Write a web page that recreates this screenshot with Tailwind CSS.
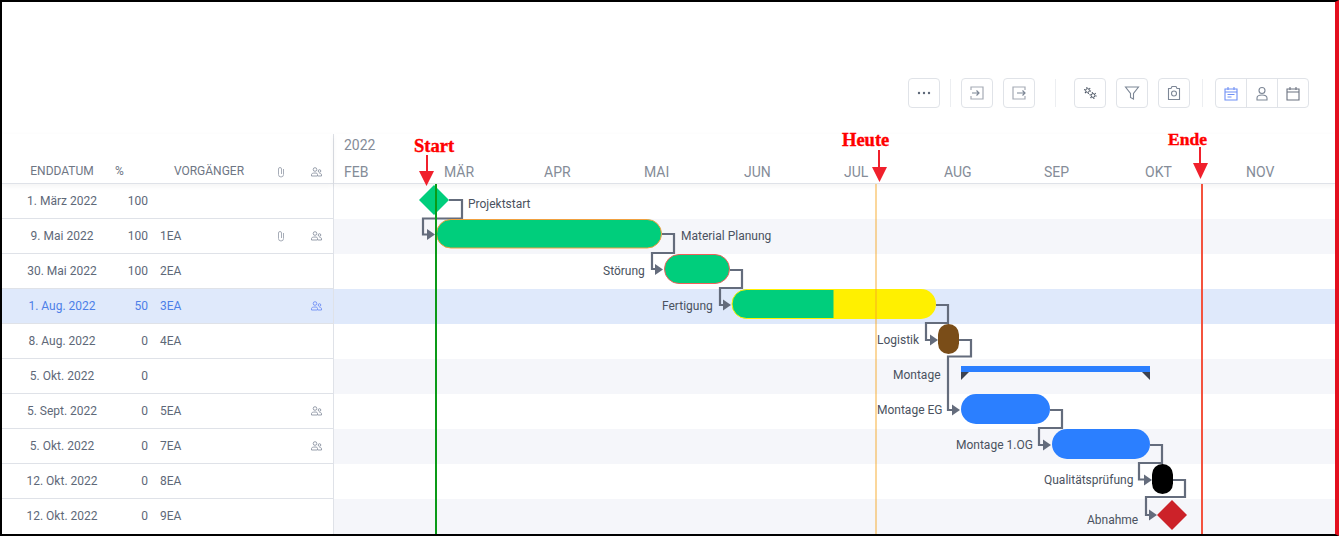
<!DOCTYPE html>
<html lang="en">
<head>
<meta charset="UTF-8">
<title>Gantt</title>
<script src="https://cdn.jsdelivr.net/npm/@tailwindcss/browser@4"></script>
</head>
<body class="bg-white w-[1341px] h-[536px] font-['Roboto',sans-serif] text-[12px] text-[#5e6878] overflow-hidden">
<div class="w-[1339px] h-[536px] border-2 border-black border-r-[#e3101f] border-r-4 flex flex-col overflow-hidden">
  <!-- toolbar -->
  <div class="h-[132px] flex items-start justify-end pt-[76px] pr-[26px] shrink-0">
    <div class="flex items-center">
      <button class="w-8 h-[30px] border border-[#e0e3e8] rounded flex items-center justify-center">
        <svg width="14" height="4" viewBox="0 0 14 4" fill="#5e6878"><circle cx="2" cy="2" r="1.2"/><circle cx="7" cy="2" r="1.2"/><circle cx="12" cy="2" r="1.2"/></svg>
      </button>
      <div class="w-px h-[28px] bg-[#eceef1] ml-[10px] mr-[10px]"></div>
      <button class="w-8 h-[30px] border border-[#e0e3e8] rounded flex items-center justify-center">
        <svg width="16" height="16" viewBox="0 0 16 16" fill="none" stroke-width="1.2"><path d="M2 5V2h12v12H2v-3" stroke="#a6abb5"/><path d="M3 8h7M7.500 5.500 10 8l-2.500 2.500" stroke="#7d8796"/></svg>
      </button>
      <button class="w-8 h-[30px] border border-[#e0e3e8] rounded flex items-center justify-center ml-[10px]">
        <svg width="16" height="16" viewBox="0 0 16 16" fill="none" stroke-width="1.2"><path d="M14 5V2H2v12h12v-3" stroke="#a6abb5"/><path d="M6 8h8M11.500 5.500 14 8l-2.500 2.500" stroke="#7d8796"/></svg>
      </button>
      <div class="w-px h-[28px] bg-[#eceef1] ml-[20px] mr-[18px]"></div>
      <button class="w-8 h-[30px] border border-[#e0e3e8] rounded flex items-center justify-center">
        <svg width="14" height="14" viewBox="0 0 14 14" fill="none" stroke="#4b5563"><circle cx="4.500" cy="4.500" r="1.900"/><circle cx="4.500" cy="4.500" r="3" stroke-width="1.200" stroke-dasharray="1.100 2.040"/><circle cx="10" cy="9.500" r="1.900"/><circle cx="10" cy="9.500" r="3" stroke-width="1.200" stroke-dasharray="1.100 2.040"/></svg>
      </button>
      <button class="w-8 h-[30px] border border-[#e0e3e8] rounded flex items-center justify-center ml-[10px]">
        <svg width="16" height="16" viewBox="0 0 16 16" fill="none" stroke="#7d8796" stroke-width="1.1"><path d="M1.500 2h13L9.500 8.500V14l-3-1.500v-4z"/></svg>
      </button>
      <button class="w-8 h-[30px] border border-[#e0e3e8] rounded flex items-center justify-center ml-[10px]">
        <svg width="16" height="16" viewBox="0 0 16 16" fill="none" stroke="#7d8796" stroke-width="1.1"><path d="M2.500 3.500h2.500l1-2h4l1 2h2.500v11h-11z"/><circle cx="8" cy="8.500" r="2.500"/></svg>
      </button>
      <div class="w-px h-[28px] bg-[#eceef1] ml-[12px] mr-[12px]"></div>
      <div class="flex border border-[#e0e3e8] rounded h-[30px]">
        <div class="w-[31px] flex items-center justify-center border-r border-[#e0e3e8]">
          <svg width="14" height="15" viewBox="0 0 14 15" fill="none" stroke="#6f8ff5" stroke-width="1.1"><path d="M1 3h12v11H1zM1 6h12M4 1v3M10 1v3M3.500 8.500h7M3.500 11h4"/></svg>
        </div>
        <div class="w-[31px] flex items-center justify-center border-r border-[#e0e3e8]">
          <svg width="14" height="15" viewBox="0 0 14 15" fill="none" stroke="#7d8796" stroke-width="1.1"><circle cx="7" cy="4.500" r="3"/><path d="M2 14v-2c0-2 2-3 5-3s5 1 5 3v2z"/></svg>
        </div>
        <div class="w-[30px] flex items-center justify-center">
          <svg width="14" height="15" viewBox="0 0 14 15" fill="none" stroke="#6b7280" stroke-width="1.1"><path d="M1 3h12v11H1zM1 6h12M4 1v3M10 1v3"/></svg>
        </div>
      </div>
    </div>
  </div>

  <div class="flex flex-1 min-h-0">
    <!-- table -->
    <div class="w-[332px] shrink-0 border-r border-[#dfe2e8] flex flex-col">
      <div class="h-[50px] shrink-0 border-b border-[#dfe2e8] flex items-end pb-[3px] text-[#6e7684] shadow-[0_2px_6px_rgba(0,0,0,0.05)]">
        <div class="w-[106px] text-center pl-[14px]">ENDDATUM</div>
        <div class="w-[22px] pl-[7px]">%</div>
        <div class="w-[130px] text-center pl-[28px]">VORGÄNGER</div>
        <div class="w-[42px] h-[16px] flex justify-center items-center"><svg width="8" height="12" viewBox="0 0 8 12" fill="none" stroke="#a7adb8"><path d="M6.500 3v5.500a2.500 2.500 0 0 1-5 0V3a1.500 1.500 0 0 1 3 0v5"/></svg></div>
        <div class="w-[28px] h-[16px] flex justify-center items-center"><svg width="11" height="10" viewBox="0 0 11 10" fill="none" stroke="#8c94a3" stroke-width=".9"><circle cx="4" cy="2.500" r="1.800"/><circle cx="8.500" cy="4" r="1.300"/><path d="M.5 9V7.500c0-1 1.500-1.500 3.500-1.500s2.500.5 2.500 1.500V9zM7 9h3.500V7.500c0-.7-1-1-2-1"/></svg></div>
      </div>
      <div class="flex h-[35px] shrink-0 border-b border-[#dfe2e8] items-center"><div class="w-[106px] text-center pl-[14px]">1. März 2022</div><div class="w-[40px] text-right">100</div></div>
      <div class="flex h-[35px] shrink-0 border-b border-[#dfe2e8] items-center"><div class="w-[106px] text-center pl-[14px]">9. Mai 2022</div><div class="w-[40px] text-right">100</div><div class="pl-[12px] w-[126px]">1EA</div><div class="w-[14px] flex justify-center"><svg width="8" height="12" viewBox="0 0 8 12" fill="none" stroke="#a7adb8"><path d="M6.500 3v5.500a2.500 2.500 0 0 1-5 0V3a1.500 1.500 0 0 1 3 0v5"/></svg></div><div class="w-[26px] ml-[15px] flex justify-center"><svg width="11" height="10" viewBox="0 0 11 10" fill="none" stroke="#8c94a3" stroke-width=".9"><circle cx="4" cy="2.500" r="1.800"/><circle cx="8.500" cy="4" r="1.300"/><path d="M.5 9V7.500c0-1 1.500-1.500 3.500-1.500s2.500.5 2.500 1.500V9zM7 9h3.500V7.500c0-.7-1-1-2-1"/></svg></div></div>
      <div class="flex h-[35px] shrink-0 border-b border-[#dfe2e8] items-center"><div class="w-[106px] text-center pl-[14px]">30. Mai 2022</div><div class="w-[40px] text-right">100</div><div class="pl-[12px]">2EA</div></div>
      <div class="flex h-[35px] shrink-0 border-b border-[#dfe2e8] items-center bg-[#dfe9fb] text-[#4d7fe8]"><div class="w-[106px] text-center pl-[14px]">1. Aug. 2022</div><div class="w-[40px] text-right">50</div><div class="pl-[12px] w-[155px]">3EA</div><div class="w-[26px] flex justify-center"><svg width="11" height="10" viewBox="0 0 11 10" fill="none" stroke="#6f8ff5" stroke-width=".9"><circle cx="4" cy="2.500" r="1.800"/><circle cx="8.500" cy="4" r="1.300"/><path d="M.5 9V7.500c0-1 1.500-1.500 3.500-1.500s2.500.5 2.500 1.500V9zM7 9h3.500V7.500c0-.7-1-1-2-1"/></svg></div></div>
      <div class="flex h-[35px] shrink-0 border-b border-[#dfe2e8] items-center"><div class="w-[106px] text-center pl-[14px]">8. Aug. 2022</div><div class="w-[40px] text-right">0</div><div class="pl-[12px]">4EA</div></div>
      <div class="flex h-[35px] shrink-0 border-b border-[#dfe2e8] items-center"><div class="w-[106px] text-center pl-[14px]">5. Okt. 2022</div><div class="w-[40px] text-right">0</div></div>
      <div class="flex h-[35px] shrink-0 border-b border-[#dfe2e8] items-center"><div class="w-[106px] text-center pl-[14px]">5. Sept. 2022</div><div class="w-[40px] text-right">0</div><div class="pl-[12px] w-[155px]">5EA</div><div class="w-[26px] flex justify-center"><svg width="11" height="10" viewBox="0 0 11 10" fill="none" stroke="#8c94a3" stroke-width=".9"><circle cx="4" cy="2.500" r="1.800"/><circle cx="8.500" cy="4" r="1.300"/><path d="M.5 9V7.500c0-1 1.500-1.500 3.500-1.500s2.500.5 2.500 1.500V9zM7 9h3.500V7.500c0-.7-1-1-2-1"/></svg></div></div>
      <div class="flex h-[35px] shrink-0 border-b border-[#dfe2e8] items-center"><div class="w-[106px] text-center pl-[14px]">5. Okt. 2022</div><div class="w-[40px] text-right">0</div><div class="pl-[12px] w-[155px]">7EA</div><div class="w-[26px] flex justify-center"><svg width="11" height="10" viewBox="0 0 11 10" fill="none" stroke="#8c94a3" stroke-width=".9"><circle cx="4" cy="2.500" r="1.800"/><circle cx="8.500" cy="4" r="1.300"/><path d="M.5 9V7.500c0-1 1.500-1.500 3.500-1.500s2.500.5 2.500 1.500V9zM7 9h3.500V7.500c0-.7-1-1-2-1"/></svg></div></div>
      <div class="flex h-[35px] shrink-0 border-b border-[#dfe2e8] items-center"><div class="w-[106px] text-center pl-[14px]">12. Okt. 2022</div><div class="w-[40px] text-right">0</div><div class="pl-[12px]">8EA</div></div>
      <div class="flex h-[35px] shrink-0 border-b border-transparent items-center"><div class="w-[106px] text-center pl-[14px]">12. Okt. 2022</div><div class="w-[40px] text-right">0</div><div class="pl-[12px]">9EA</div></div>
    </div>

    <!-- gantt -->
    <div class="relative flex-1 min-w-0">
      <div class="h-[50px] border-b border-[#dfe2e8] flex flex-col text-[14px] text-[#858c98] shadow-[0_2px_6px_rgba(0,0,0,0.05)]">
        <div class="pl-[10px] pt-[1px] h-[28px]">2022</div>
        <div class="flex pl-[10px]">
          <span class="w-[100px]">FEB</span><span class="w-[100px]">MÄR</span><span class="w-[100px]">APR</span><span class="w-[100px]">MAI</span><span class="w-[100px]">JUN</span><span class="w-[100px]">JUL</span><span class="w-[100px]">AUG</span><span class="w-[101px]">SEP</span><span class="w-[101px]">OKT</span><span>NOV</span>
        </div>
      </div>
      <div class="h-[35px]"></div>
      <div class="h-[35px] bg-[#f5f6fa]"></div>
      <div class="h-[35px]"></div>
      <div class="h-[35px] bg-[#dfe9fb]"></div>
      <div class="h-[35px]"></div>
      <div class="h-[35px] bg-[#f5f6fa]"></div>
      <div class="h-[35px]"></div>
      <div class="h-[35px] bg-[#f5f6fa]"></div>
      <div class="h-[35px]"></div>
      <div class="h-[35px] bg-[#f5f6fa]"></div>

      <!-- canvas drawn in page coords, offset by the panel origin (334,134) -->
      <svg class="absolute left-0 top-0" width="1001" height="400" viewBox="334 134 1001 400" fill="none">
        <g stroke="#646c7c" stroke-width="2.200">
          <path d="M449 200h13v18.500h-39v16h7"/>
          <path d="M662 234h12v19h-22v16h5"/>
          <path d="M730 270h12v18h-22v17h5"/>
          <path d="M936 305h12v18h-22v17h5"/>
          <path d="M959 340h12v16.500h-23V410h5"/>
          <path d="M1050 410h12v18h-23v17h5"/>
          <path d="M1150 445h12v18h-23v16.500h6"/>
          <path d="M1173 480h12v17h-39v18h5"/>
        </g>
        <g fill="#646c7c">
          <path d="M427 229l8 5.500-8 5.500z"/><path d="M655 264l8 5.500-8 5.500z"/><path d="M723 299.500l8 5.500-8 5.500z"/><path d="M930 334.500l8 5.500-8 5.500z"/><path d="M952 404.500l8 5.500-8 5.500z"/><path d="M1043 439.500l8 5.500-8 5.500z"/><path d="M1144 474.500l8 5.500-8 5.500z"/><path d="M1149 509.500l8 5.500-8 5.500z"/>
        </g>
        <path d="M434 185l15 15-15 15-15-15z" fill="#00ce7c"/>
        <rect x="436.500" y="219.500" width="225" height="28.500" rx="14.250" fill="#00ce7c" stroke="#f0a040"/>
        <rect x="664.500" y="254.500" width="65" height="29" rx="14.500" fill="#00ce7c" stroke="#f0605a"/>
        <path d="M834 289.500H746.500a14.500 14.500 0 0 0 0 29H834z" fill="#00ce7c" stroke="#fff000"/>
        <path d="M834 289h87a15 15 0 0 1 0 30h-87z" fill="#fff000"/>
        <rect x="938" y="324" width="21" height="30" rx="10.500" fill="#7a4d18"/>
        <rect x="961" y="366" width="189" height="6" fill="#2b7fff"/>
        <path d="M961 372h8l-8 8zM1150 372h-8l8 8z" fill="#3c4250"/>
        <rect x="961" y="394" width="89" height="30" rx="15" fill="#2b7fff"/>
        <rect x="1052" y="429" width="98" height="30" rx="15" fill="#2b7fff"/>
        <rect x="1152" y="464" width="21" height="30" rx="10.500" fill="#000"/>
        <path d="M1172 500l15 15-15 15-15-15z" fill="#cc2229"/>
        <path d="M436 184v350" stroke="#0a9a17" stroke-width="2"/>
        <path d="M876 184v350" stroke="#f6a623" stroke-opacity=".45" stroke-width="2"/>
        <path d="M1202 184v350" stroke="#f4533e" stroke-width="2"/>
      </svg>

      <div class="absolute left-[134px] top-[61px] text-[#4a5260]">Projektstart</div>
      <div class="absolute left-[347px] top-[93px] text-[#4a5260]">Material Planung</div>
      <div class="absolute left-[269px] top-[128px] text-[#4a5260]">Störung</div>
      <div class="absolute left-[328px] top-[163px] text-[#4a5260]">Fertigung</div>
      <div class="absolute left-[543px] top-[197px] text-[#4a5260]">Logistik</div>
      <div class="absolute left-[559px] top-[232px] text-[#4a5260]">Montage</div>
      <div class="absolute left-[543px] top-[267px] text-[#4a5260]">Montage EG</div>
      <div class="absolute left-[622px] top-[302px] text-[#4a5260]">Montage 1.OG</div>
      <div class="absolute left-[710px] top-[337px] text-[#4a5260]">Qualitätsprüfung</div>
      <div class="absolute left-[753px] top-[377px] text-[#4a5260]">Abnahme</div>

      <!-- red annotations -->
      <div class="absolute left-[80px] top-[3px] text-[#f00] font-['Liberation_Serif',serif] font-bold text-[18.500px] leading-[18px] [-webkit-text-stroke:0.4px_#f00]">Start</div>
      <div class="absolute left-[508px] top-[-3px] text-[#f00] font-['Liberation_Serif',serif] font-bold text-[18.500px] leading-[18px] [-webkit-text-stroke:0.4px_#f00]">Heute</div>
      <div class="absolute left-[834px] top-[-4px] text-[#f00] font-['Liberation_Serif',serif] font-bold text-[17.500px] leading-[18px] [-webkit-text-stroke:0.4px_#f00]">Ende</div>
      <svg class="absolute left-0 top-0" width="1001" height="60" viewBox="334 134 1001 60" fill="#f0202c" stroke="none">
        <path d="M426 155h2v17h-2zM419 171h15l-7.500 15z"/>
        <path d="M878 150h2v18h-2zM872 167h15l-7.500 15z"/>
        <path d="M1199 147h2v17h-2zM1193 163h15l-7.500 16z"/>
      </svg>
    </div>
  </div>
</div>
</body>
</html>
